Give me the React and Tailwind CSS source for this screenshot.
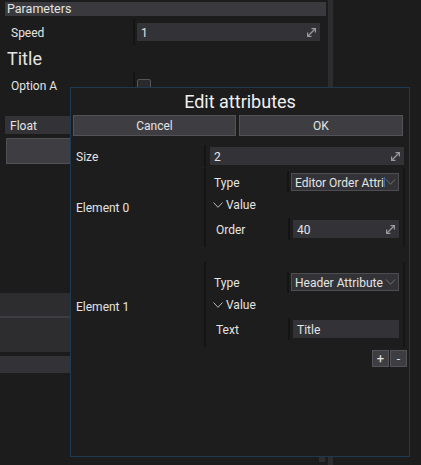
import React from "react";

const Expand = () => (
  <svg width="11" height="11" viewBox="0 0 11 11" fill="none" stroke="#9a9a9a" strokeWidth="1.2">
    <path d="M2 9 L9 2" />
    <path d="M5.5 1.6 H9.4 V5.5" />
    <path d="M1.6 5.5 V9.4 H5.5" />
  </svg>
);

const Chev = ({ c = "#7d7d82", w = 10, h = 6 }) => (
  <svg width={w} height={h} viewBox="0 0 10 6" fill="none">
    <path d="M0.5 0.5 L5 5.3 L9.5 0.5" stroke={c} strokeWidth="1" />
  </svg>
);

const Sep = () => <div className="w-[2px] self-stretch bg-[#141414]" />;

const Field = ({ children, w, expand = true, cls = "" }) => (
  <div className={`h-[18px] bg-[#333337] flex items-center pl-[4px] pr-[3px] ${w} ${cls}`}>
    <span className="flex-1 leading-[18px] pt-[1px]">{children}</span>
    {expand && <Expand />}
  </div>
);

const Dropdown = ({ children }) => (
  <div className="ml-[2px] w-[108px] h-[18px] bg-[#333337] border border-[#4d4d52] flex items-center pl-[3px] pr-[2px]">
    <span className="flex-1 min-w-0 overflow-hidden whitespace-nowrap leading-[16px] pt-[1px]">{children}</span>
    <Chev c="#6f6f74" w={11} h={6} />
  </div>
);

const Element = ({ label, pt, labelPt, typeVal, subLabel, subField }) => (
  <div className="flex">
    <div className={`w-[133px] flex items-center pl-[5px] ${labelPt}`}>{label}</div>
    <Sep />
    <div className={`w-[199px] flex flex-col ${pt} pb-[7px] border-r-2 border-[#161616]`}>
      <div className="h-[22px] flex items-center">
        <div className="w-[81px] pl-[8px] pt-[1px]">Type</div>
        <Sep />
        <Dropdown>{typeVal}</Dropdown>
      </div>
      <div className="h-[23px] flex items-center pl-[7px]">
        <Chev c="#b8b8bc" w={10} h={6} />
        <span className="ml-[3px] pt-[1px]">Value</span>
      </div>
      <div className="mt-[2px] h-[22px] flex items-center">
        <div className="w-[82px] pl-[10px] pt-[1px]">{subLabel}</div>
        <Sep />
        <div className="ml-[2px]">{subField}</div>
      </div>
    </div>
  </div>
);

export default function App() {
  return (
    <div className="relative w-[421px] h-[465px] overflow-hidden bg-[#1c1c1c] text-[12px] text-[#e4e4e4] font-['Roboto','Noto_Sans',sans-serif]">
      <div className="flex h-full">
        <div className="w-[328px] flex flex-col">
          <div className="h-[293px] flex flex-col pt-[2px] pl-[5px] pr-[2px]">
            <div className="h-[14px] bg-[#3a3a3e] pl-[2px] leading-[14px] text-[12.5px]">Parameters</div>
            <div className="mt-[3px] h-[26px] flex items-center">
              <div className="w-[128px] pl-[6px] pt-[1px]">Speed</div>
              <Sep />
              <Field w="w-[183px] ml-[2px]">1</Field>
            </div>
            <div className="h-[27px] flex items-center pl-[2px] text-[18px]">Title</div>
            <div className="h-[27px] flex items-center">
              <div className="w-[128px] pl-[6px] pt-[1px]">Option A</div>
              <Sep />
              <div className="ml-[2px] w-[14px] h-[14px] border border-[#55555a] rounded-[2px] bg-[#2a2a2d]" />
            </div>
            <div className="mt-[17px] h-[18px] w-[200px] bg-[#333337] pl-[5px] leading-[18px] pt-[1px]">Float</div>
            <div className="mt-[4px] ml-[1px] h-[26px] w-[200px] bg-[#3e3e42] border border-[#505055]" />
          </div>
          <div className="h-[23px] bg-[#2d2d30]" />
          <div className="h-[2px] bg-[#3d3d41]" />
          <div className="h-[34px] bg-[#2d2d30]" />
          <div className="h-[4px]" />
          <div className="h-[17px] bg-[#333337]" />
          <div className="flex-1 relative">
            <div className="absolute left-[319px] top-[84px] w-[6px] h-[5px] bg-[#2e2e31]" />
          </div>
        </div>
        <div className="w-[5px] bg-[#2d2d30]" />
      </div>

      <div className="absolute left-[70px] top-[87px] w-[340px] h-[370px] border border-[#1c3b52] bg-[#1d1d1d] flex flex-col">
        <div className="h-[26px] flex items-center justify-center text-[18px] text-[#f0f0f0]">Edit attributes</div>
        <div className="mt-[1px] flex gap-[3px] pl-[2px] h-[21px]">
          <div className="w-[163px] bg-[#3e3e42] border border-[#525257] flex items-center justify-center pt-[1px]">Cancel</div>
          <div className="w-[164px] bg-[#3e3e42] border border-[#525257] flex items-center justify-center pt-[1px]">OK</div>
        </div>
        <div className="mt-[9px] h-[22px] flex items-center">
          <div className="w-[133px] pl-[5px] pt-[1px]">Size</div>
          <Sep />
          <Field w="w-[194px] ml-[4px]">2</Field>
        </div>
        <div className="mt-[1px]">
          <Element
            label="Element 0"
            pt="pt-[3px]"
            labelPt="pt-[1px]"
            typeVal="Editor Order Attribute"
            subLabel="Order"
            subField={<Field w="w-[106px] ml-[1px]">40</Field>}
          />
        </div>
        <div className="mt-[15px]">
          <Element
            label="Element 1"
            pt="pt-[9px]"
            labelPt="pt-[4px]"
            typeVal="Header Attribute"
            subLabel="Text"
            subField={<Field w="w-[106px] ml-[1px]" expand={false}>Title</Field>}
          />
        </div>
        <div className="mt-[3px] flex justify-end pr-[2px] gap-[1px]">
          <div className="w-[17px] h-[17px] bg-[#3e3e42] border border-[#525257] flex items-center justify-center leading-none text-[13px]">+</div>
          <div className="w-[17px] h-[17px] bg-[#3e3e42] border border-[#525257] flex items-center justify-center leading-none text-[12px]">-</div>
        </div>
      </div>
    </div>
  );
}
